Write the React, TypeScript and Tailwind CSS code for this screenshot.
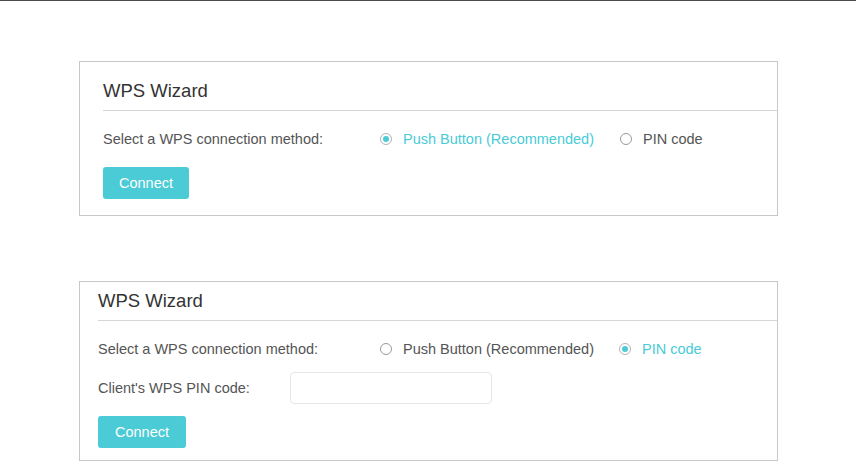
import React from "react";

function Radio({ checked, label }: { checked: boolean; label: string }) {
	return (
		<label className="flex items-center gap-[11px]">
			<span
				className={
					"flex h-[12px] w-[12px] items-center justify-center rounded-full border " +
					(checked ? "border-[#b5b5b5]" : "border-[#9a9a9a]")
				}
			>
				{checked && <span className="h-[6px] w-[6px] rounded-full bg-[#4acbd6]" />}
			</span>
			<span className={checked ? "text-[#4acbd6]" : "text-[#555]"}>{label}</span>
		</label>
	);
}

function ConnectButton({ wide }: { wide?: boolean }) {
	return (
		<button
			className={
				"h-[32px] rounded-[3px] bg-[#4acbd6] text-[14.5px] text-white " + (wide ? "w-[88px]" : "w-[86px]")
			}
		>
			Connect
		</button>
	);
}

export default function App() {
	return (
		<div
			className="min-h-[461px] w-[856px] border-t border-[#4a4a4a] bg-white text-[14.5px] leading-[20px] text-[#555]"
			style={{ fontFamily: '"Liberation Sans", Arial, sans-serif' }}
		>
			{/* push button mode */}
			<div className="ml-[79px] mt-[60px] w-[699px] border border-[#c8c8c8] pb-[16px]">
				<div className="ml-[23px] border-b border-[#d6d6d6] pb-[7px] pt-[17px]">
					<h2 className="text-[18.5px] leading-[24px] text-[#333]">WPS Wizard</h2>
				</div>
				<div className="ml-[23px] mt-[18px] flex">
					<div className="w-[277px]">Select a WPS connection method:</div>
					<div className="flex gap-[26px]">
						<Radio checked label="Push Button (Recommended)" />
						<Radio checked={false} label="PIN code" />
					</div>
				</div>
				<div className="ml-[23px] mt-[18px]">
					<ConnectButton />
				</div>
			</div>

			{/* PIN mode */}
			<div className="ml-[79px] mt-[65px] w-[699px] border border-[#c8c8c8] pb-[12px]">
				<div className="ml-[18px] border-b border-[#d6d6d6] pb-[7px] pt-[7px]">
					<h2 className="text-[18.5px] leading-[24px] text-[#333]">WPS Wizard</h2>
				</div>
				<div className="ml-[18px] mt-[18px] flex">
					<div className="w-[282px]">Select a WPS connection method:</div>
					<div className="flex gap-[25px]">
						<Radio checked={false} label="Push Button (Recommended)" />
						<Radio checked label="PIN code" />
					</div>
				</div>
				<div className="ml-[18px] mt-[13px] flex items-center">
					<div className="w-[192px]">Client's WPS PIN code:</div>
					<input className="h-[32px] w-[202px] rounded-[4px] border border-[#e6e6e6] px-2 outline-none" />
				</div>
				<div className="ml-[18px] mt-[12px]">
					<ConnectButton wide />
				</div>
			</div>
		</div>
	);
}
